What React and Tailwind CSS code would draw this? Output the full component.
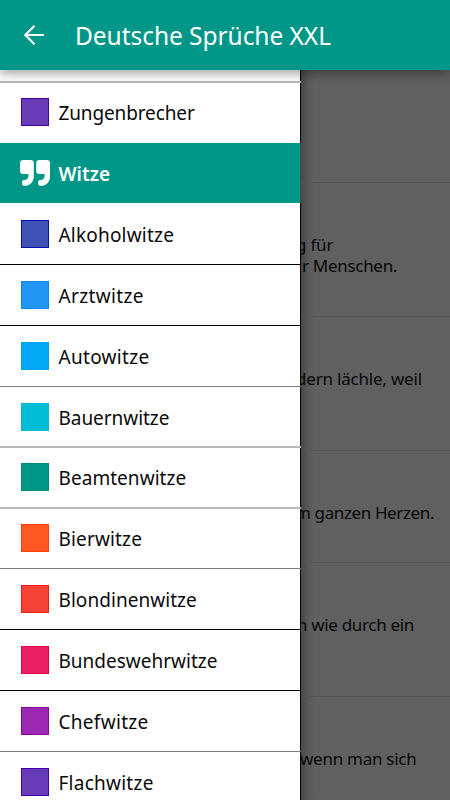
const rows = [
  { label: 'Alkoholwitze', box: 'bg-[#3f51b5] border-[#0010a8]', row: 'h-[61px] pt-[17px]', line: 'h-px bg-black', text: 'tracking-[0.2px]' },
  { label: 'Arztwitze', box: 'bg-[#2196f3] border-[#0a86f8]', row: 'h-[60px] pt-[16px]', line: 'h-px bg-black', text: 'tracking-[0.35px]' },
  { label: 'Autowitze', box: 'bg-[#03a9f4] border-[#00a0f8]', row: 'h-[60px] pt-[16px]', line: 'h-px bg-[#7d7d7d]', text: 'tracking-[0.3px]' },
  { label: 'Bauernwitze', box: 'bg-[#00bcd4] border-[#00b7d2]', row: 'h-[59px] pt-[16px]', line: 'h-[2px] bg-[#b9b9b9]', text: 'tracking-[-0.05px]' },
  { label: 'Beamtenwitze', box: 'bg-[#009688] border-[#008c7c]', row: 'h-[59px] pt-[15px]', line: 'h-[2px] bg-[#b9b9b9]', text: 'tracking-[0.05px]' },
  { label: 'Bierwitze', box: 'bg-[#ff5722] border-[#ff4200]', row: 'h-[59px] pt-[15px]', line: 'h-px bg-[#7d7d7d]', text: 'tracking-[0.15px]' },
  { label: 'Blondinenwitze', box: 'bg-[#f44336] border-[#f51b0c]', row: 'h-[60px] pt-[16px]', line: 'h-px bg-black', text: 'tracking-[0.05px]' },
  { label: 'Bundeswehrwitze', box: 'bg-[#e91e63] border-[#e60045]', row: 'h-[60px] pt-[16px]', line: 'h-px bg-black', text: 'tracking-normal' },
  { label: 'Chefwitze', box: 'bg-[#9c27b0] border-[#8a009f]', row: 'h-[60px] pt-[16px]', line: 'h-px bg-[#7d7d7d]', text: 'tracking-[0.3px]' },
  { label: 'Flachwitze', box: 'bg-[#673ab7] border-[#4800a8]', row: 'h-[60px] pt-[16px]', line: 'h-px bg-black', text: 'tracking-[0.25px]' },
];

function Row({ label, box, row, line, text }) {
  return (
    <>
      <div className={`flex shrink-0 items-start border-r border-black bg-white pl-[21px] ${row}`}>
        <div className={`size-7 shrink-0 border ${box}`} />
        <span className={`ml-[9.5px] mt-px whitespace-nowrap text-[19px] leading-7 text-[#0a0a0a] ${text}`}>{label}</span>
      </div>
      <div className={`shrink-0 ${line}`} />
    </>
  );
}

function QuoteIcon() {
  return (
    <svg className="h-[26px] w-[30px] shrink-0" viewBox="0 0 30 26" fill="currentColor">
      <path d="M3.2 0h7.4a3.2 3.2 0 0 1 3.2 3.2v13.2c0 5.4-3.8 9.4-9.2 9.4H3.8a1.8 1.8 0 0 1-1.8-1.8v-2.2a1.8 1.8 0 0 1 1.8-1.8h.6c2.4 0 4-1.7 4-4v-2.1H3.2A3.2 3.2 0 0 1 0 10.7V3.2A3.2 3.2 0 0 1 3.2 0z" />
      <path transform="translate(16.2 0)" d="M3.2 0h7.4a3.2 3.2 0 0 1 3.2 3.2v13.2c0 5.4-3.8 9.4-9.2 9.4H3.8a1.8 1.8 0 0 1-1.8-1.8v-2.2a1.8 1.8 0 0 1 1.8-1.8h.6c2.4 0 4-1.7 4-4v-2.1H3.2A3.2 3.2 0 0 1 0 10.7V3.2A3.2 3.2 0 0 1 3.2 0z" />
    </svg>
  );
}

const quotes = [
  { height: 'h-[113px]', pad: '', lines: [] },
  { height: 'h-[134px]', pad: 'pt-[51px]', lines: [['g für', '-ml-[5px] tracking-[-0.2px]'], ['r Menschen.', 'ml-px tracking-[-0.3px]']] },
  { height: 'h-[134px]', pad: 'pt-[51px]', lines: [['dern lächle, weil', '-ml-[5px] tracking-[-0.2px]']] },
  { height: 'h-[112px]', pad: 'pt-[51px]', lines: [['m ganzen Herzen.', '-ml-[6px] tracking-[-0.38px]']] },
  { height: 'h-[134px]', pad: 'pt-[51px]', lines: [['n wie durch ein', '-ml-[4px] tracking-[-0.33px]']] },
  { height: 'h-[134px]', pad: 'pt-[51px]', lines: [['wenn man sich', '-ml-px tracking-[-0.27px]']] },
];

export default function App() {
  return (
    <div className="flex h-[800px] w-[450px] flex-col overflow-hidden bg-[#606060] font-['Noto_Sans',sans-serif]">
      <header className="relative z-10 flex h-[70px] shrink-0 items-center bg-[#009688] pl-[24px] text-white shadow-[0_4px_10px_rgba(0,0,0,0.35)]">
        <svg className="size-5 shrink-0" viewBox="0 0 20 20" fill="none" stroke="currentColor" strokeWidth="2.2">
          <path d="M20 10H2M10.5 0.8L1.4 10l9.1 9.2" />
        </svg>
        <h1 className="ml-[31px] mt-px whitespace-nowrap text-[24.5px] leading-8 tracking-[-0.05px]">Deutsche Sprüche XXL</h1>
      </header>
      <div className="flex min-h-0 flex-1">
        <nav className="flex w-[301px] shrink-0 flex-col overflow-hidden bg-[#4c4c4c]">
          <div className="h-[11px] shrink-0 border-r border-black bg-white" />
          <div className="h-[2px] shrink-0 bg-[#b9b9b9]" />
          <div className="flex h-[60px] shrink-0 items-start border-r border-black bg-white pl-[21px] pt-[15px]">
            <div className="size-7 border border-[#4800a8] bg-[#673ab7]" />
            <span className="ml-[9.5px] mt-px text-[19px] leading-7 tracking-[-0.13px] text-[#0a0a0a]">Zungenbrecher</span>
          </div>
          <div className="flex h-[60px] w-[300px] shrink-0 items-center bg-[#009688] pl-5 text-white">
            <QuoteIcon />
            <span className="ml-[8.5px] mt-[3px] text-[19px] font-semibold">Witze</span>
          </div>
          {rows.map((r) => <Row key={r.label} {...r} />)}
        </nav>
        <main className="flex w-[149px] flex-col overflow-hidden shadow-[inset_12px_0_10px_-8px_rgba(0,0,0,0.3)]">
          {quotes.map((q, i) => (
            <section key={i} className={`shrink-0 border-b border-[#555] text-[17px] leading-[21px] text-[#080808] ${q.height} ${q.pad}`}>
              {q.lines.map(([t, m]) => <p key={t} className={`whitespace-nowrap ${m}`}>{t}</p>)}
            </section>
          ))}
        </main>
      </div>
    </div>
  );
}
